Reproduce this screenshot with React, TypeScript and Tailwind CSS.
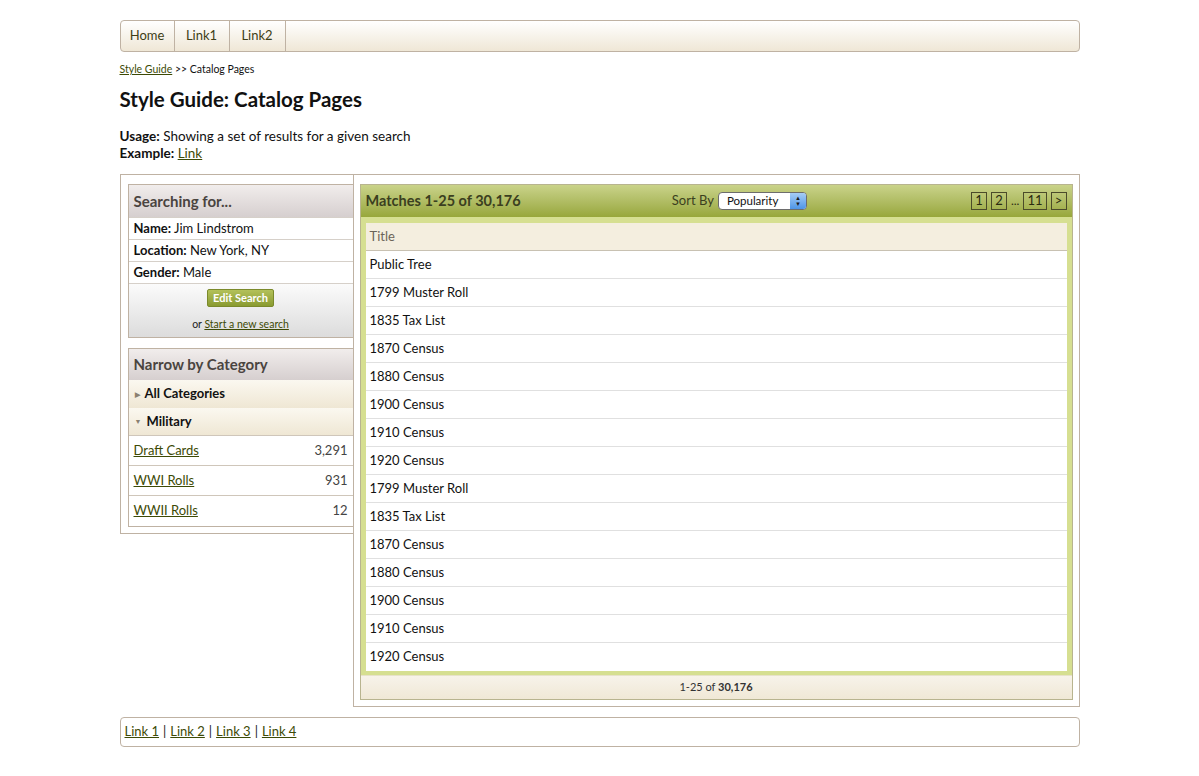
import React from 'react';

const font = { fontFamily: 'Lato, "Liberation Sans", sans-serif' };

const results = [
  'Public Tree',
  '1799 Muster Roll',
  '1835 Tax List',
  '1870 Census',
  '1880 Census',
  '1900 Census',
  '1910 Census',
  '1920 Census',
  '1799 Muster Roll',
  '1835 Tax List',
  '1870 Census',
  '1880 Census',
  '1900 Census',
  '1910 Census',
  '1920 Census',
];

const categories = [
  { name: 'Draft Cards', count: '3,291' },
  { name: 'WWI Rolls', count: '931' },
  { name: 'WWII Rolls', count: '12' },
];

const PageBox: React.FC<{ label: string }> = ({ label }) => (
  <span className="h-[18px] min-w-[16px] px-[3px] border border-[#4b4b2a] flex items-center justify-center text-[13px] text-[#2a2a10]">
    {label}
  </span>
);

const App: React.FC = () => {
  return (
    <div className="min-h-screen bg-white text-[#111]" style={font}>
      <div className="w-[960px] mx-auto pt-[20px]">
        {/* top nav */}
        <div className="h-[32px] flex border border-[#bfb2a3] rounded-[4px] bg-gradient-to-b from-white to-[#efe7d6] overflow-hidden">
          {['Home', 'Link1', 'Link2'].map((l, i) => (
            <div
              key={l}
              className={`h-full flex items-center justify-center text-[13px] text-[#3e3e16] border-r border-[#bfb2a3] ${i === 0 ? 'w-[54px]' : i === 1 ? 'w-[55px]' : 'w-[56px]'}`}
            >
              {l}
            </div>
          ))}
        </div>

        <div className="mt-[10px] text-[10.5px] leading-[14px]">
          <a className="underline text-[#3d4a05]">Style Guide</a> &gt;&gt; Catalog Pages
        </div>

        <h1 className="mt-[11px] text-[20.5px] leading-[24px] font-bold">Style Guide: Catalog Pages</h1>

        <div className="mt-[17px] text-[13.5px] leading-[17px]">
          <div>
            <b>Usage:</b> Showing a set of results for a given search
          </div>
          <div>
            <b>Example:</b> <a className="underline text-[#3d4a05]">Link</a>
          </div>
        </div>

        {/* main area */}
        <div className="mt-[12px] flex items-start">
          <div className="w-[233px] h-[360px] border-l border-t border-b border-[#bfb2a3] pl-[7px] pt-[9px] shrink-0">
            <div className="w-[226px] border border-[#bfb2a3] relative z-10">
              <div className="h-[32px] px-[5px] flex items-center text-[15px] font-bold text-[#4a4440] bg-gradient-to-b from-[#f1edec] to-[#d6cfcf]">
                Searching for...
              </div>
              {[
                ['Name:', 'Jim Lindstrom'],
                ['Location:', 'New York, NY'],
                ['Gender:', 'Male'],
              ].map(([k, v]) => (
                <div key={k} className="h-[22px] px-[5px] flex items-center text-[13px] bg-white border-t border-[#d6d0c9]">
                  <b>{k}</b>&nbsp;{v}
                </div>
              ))}
              <div className="h-[54px] border-t border-[#d6d0c9] bg-gradient-to-b from-[#fbfbfb] to-[#dcdcdc] flex flex-col items-center pt-[5px]">
                <span className="h-[18px] px-[5px] rounded-[2px] border border-[#7b8a2b] bg-gradient-to-b from-[#b3c15a] to-[#8a9b30] text-white text-[11px] font-bold flex items-center">
                  Edit Search
                </span>
                <div className="mt-[10px] text-[10.5px] text-[#222]">
                  or <a className="underline text-[#3d4a05]">Start a new search</a>
                </div>
              </div>
            </div>

            <div className="w-[226px] mt-[10px] border border-[#bfb2a3] relative z-10">
              <div className="h-[31px] px-[5px] flex items-center text-[15px] font-bold text-[#4a4440] bg-gradient-to-b from-[#f1edec] to-[#d6cfcf]">
                Narrow by Category
              </div>
              <div className="h-[28px] px-[6px] flex items-center text-[13px] font-bold bg-gradient-to-b from-[#fbf8f0] to-[#efe7d4]">
                <span className="text-[7px] text-[#8a8070] mr-[5px]">▶</span>All Categories
              </div>
              <div className="h-[28px] px-[6px] flex items-center text-[13px] font-bold bg-gradient-to-b from-[#fbf8f0] to-[#efe7d4] border-b border-[#cfc6ba]">
                <span className="text-[7px] text-[#8a8070] mr-[5px]">▼</span>Military
              </div>
              {categories.map((c, i) => (
                <div
                  key={c.name}
                  className={`h-[30px] px-[5px] flex items-center justify-between text-[13px] bg-white ${i < categories.length - 1 ? 'border-b border-[#cfc6ba]' : ''}`}
                >
                  <a className="underline text-[#3d4a05]">{c.name}</a>
                  <span className="text-[#444]">{c.count}</span>
                </div>
              ))}
            </div>
          </div>

          <div className="flex-1 border border-[#bfb2a3] px-[6px] pt-[9px] pb-[6px]">
            <div className="border border-[#b8b48f]">
              <div className="h-[32px] px-[5px] flex items-center bg-gradient-to-b from-[#cad38a] to-[#98a73a]">
                <span className="text-[14.5px] font-bold text-[#3b3f20]">Matches 1-25 of 30,176</span>
                <div className="ml-auto mr-[164px] flex items-center gap-[4px]">
                  <span className="text-[13px] text-[#3b3f20]">Sort By</span>
                  <div className="h-[18px] w-[89px] rounded-[4px] border border-[#6d6d6d] bg-white flex items-center overflow-hidden">
                    <span className="flex-1 pl-[8px] text-[11.5px] text-[#111]">Popularity</span>
                    <span className="w-[16px] h-full bg-gradient-to-b from-[#a6cdf5] to-[#4d95e6] flex flex-col items-center justify-center text-[6px] leading-[6px] text-[#1a1a1a]">
                      <span>▲</span>
                      <span>▼</span>
                    </span>
                  </div>
                </div>
                <div className="flex items-center gap-[4px]">
                  <PageBox label="1" />
                  <PageBox label="2" />
                  <span className="text-[12px] text-[#2a2a10]">...</span>
                  <PageBox label="11" />
                  <PageBox label=">" />
                </div>
              </div>

              <div className="bg-[#d6df91] px-[5px] pt-[6px] pb-[4px]">
                <div className="h-[28px] px-[4px] flex items-center bg-[#f4eedf] border-b border-[#c8c1b2] text-[13px] text-[#6b6458]">
                  Title
                </div>
                {results.map((r, i) => (
                  <div
                    key={i}
                    className={`h-[28px] px-[4px] flex items-center bg-white text-[13px] text-[#111] ${i < results.length - 1 ? 'border-b border-[#e0e0e0]' : ''}`}
                  >
                    {r}
                  </div>
                ))}
              </div>

              <div className="h-[24px] flex items-center justify-center text-[11px] text-[#333] bg-gradient-to-b from-[#f7f3ea] to-[#f0e8d6] border-t border-[#e7e2c9]">
                1-25 of&nbsp;<b>30,176</b>
              </div>
            </div>
          </div>
        </div>

        {/* footer links */}
        <div className="mt-[10px] h-[30px] border border-[#bfb2a3] rounded-[4px] px-[4px] flex items-center text-[13px] text-[#222]">
          <a className="underline text-[#3d4a05]">Link 1</a>
          <span className="px-[4px]">|</span>
          <a className="underline text-[#3d4a05]">Link 2</a>
          <span className="px-[4px]">|</span>
          <a className="underline text-[#3d4a05]">Link 3</a>
          <span className="px-[4px]">|</span>
          <a className="underline text-[#3d4a05]">Link 4</a>
        </div>
      </div>
    </div>
  );
};

export default App;
